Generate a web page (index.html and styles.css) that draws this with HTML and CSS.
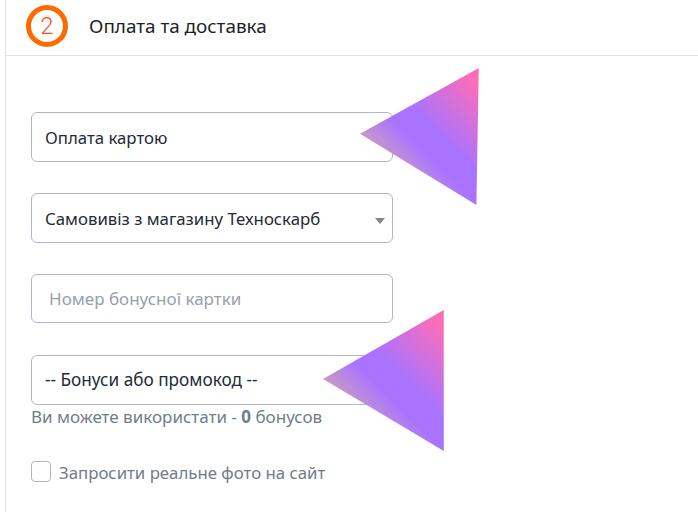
FILE: index.html
```html
<!DOCTYPE html>
<html lang="en">
<head>
    <meta charset="UTF-8">
    <meta name="viewport" content="width=device-width, initial-scale=1.0">
    <title>Оплата та доставка</title>
    <link rel="stylesheet" href="styles.css">
</head>
<body>
    <div class="panel">
        <div class="panel-head">
            <div class="step-num">2</div>
            <div class="step-title">Оплата та доставка</div>
        </div>

        <div class="panel-body">
            <div class="field">Оплата картою</div>
            <div class="field field-select">Самовивіз з магазину Техноскарб</div>
            <div class="field field-input">Номер бонусної картки</div>
            <div class="field field-promo">-- Бонуси або промокод --</div>
            <div class="bonus-note">Ви можете використати - <b>0</b> бонусов</div>
            <label class="check-row">
                <span class="check-box"></span>
                <span>Запросити реальне фото на сайт</span>
            </label>
        </div>
    </div>

    <!-- Decorative triangles -->
    <div class="tri tri-1"></div>
    <div class="tri tri-2"></div>
</body>
</html>
```

FILE: styles.css
```css
* {
    margin: 0;
    padding: 0;
    box-sizing: border-box;
}

html, body {
    height: 100%;
    overflow: hidden;
}

body {
    font-family: 'Noto Sans', sans-serif;
    font-size: 16.8px;
    background: #fff;
    position: relative;
}

.panel {
    margin-left: 5px;
    height: 100%;
    border-left: 1px solid #e2e2e6;
}

.panel-head {
    display: flex;
    align-items: center;
    height: 56px;
    padding: 0 0 4px 20px;
    border-bottom: 1px solid #e0e0e4;
}

.step-num {
    display: flex;
    align-items: center;
    justify-content: center;
    width: 42px;
    height: 42px;
    border: 5px solid #ff6a00;
    border-radius: 50%;
    color: #f4511e;
    font-family: 'Roboto', sans-serif;
    font-size: 24px;
    font-weight: 300;
}

.step-title {
    margin-left: 21px;
    color: #1c1f26;
    font-size: 18.9px;
}

.panel-body {
    padding: 56px 0 0 25px;
}

.field {
    display: flex;
    align-items: center;
    width: 362px;
    height: 50px;
    margin-bottom: 31px;
    padding-left: 13px;
    border: 1px solid #b4b4c4;
    border-radius: 6px;
    color: #232b38;
    background: transparent;
}

.field-select {
    position: relative;
}

.field-select::after {
    content: '';
    position: absolute;
    right: 7px;
    top: 24px;
    border-left: 5px solid transparent;
    border-right: 5px solid transparent;
    border-top: 6px solid #888;
}

.field-input {
    height: 49px;
    margin-bottom: 32px;
    padding-left: 17px;
    color: #98a0ac;
    font-size: 17px;
}

.field-promo {
    margin-bottom: 0;
    padding-bottom: 2px;
    font-size: 17.2px;
}

.bonus-note {
    color: #727c8a;
    font-size: 17px;
    line-height: 23px;
}

.check-row {
    display: flex;
    align-items: center;
    margin-top: 30px;
    color: #727c8a;
}

.check-box {
    width: 20px;
    height: 21px;
    margin-right: 8px;
    border: 1px solid #b4b4c4;
    border-radius: 4px;
}

.check-row span:last-child {
    padding-top: 3px;
}

.tri {
    position: absolute;
    background: linear-gradient(225deg, #ff6db5 6%, #a973ff 42%, #a973ff 54%, #d4aab0 80%);
}

.tri-1 {
    left: 360px;
    top: 68px;
    width: 120px;
    height: 137px;
    clip-path: polygon(0 48%, 99% 0, 97% 100%);
}

.tri-2 {
    left: 323px;
    top: 310px;
    width: 122px;
    height: 141px;
    clip-path: polygon(0 49%, 99% 0, 99% 100%);
}
```
